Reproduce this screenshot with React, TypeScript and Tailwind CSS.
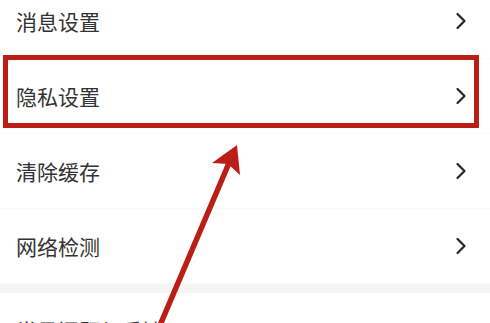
const items = ["消息设置", "隐私设置", "清除缓存", "网络检测"];

function Chevron() {
  return (
    <svg width="12" height="18" viewBox="0 0 12 18" fill="none">
      <polyline
        points="2.5,2 9.5,9 2.5,16"
        stroke="#262626"
        strokeWidth="2.2"
        strokeLinecap="round"
        strokeLinejoin="round"
      />
    </svg>
  );
}

function Row({ label }: { label: string }) {
  return (
    <div className="flex h-[75px] items-center justify-between border-b border-[#fafafa] pl-4 pr-[23px]">
      <span className="text-[21px] leading-none text-[#333]">{label}</span>
      <Chevron />
    </div>
  );
}

export default function App() {
  return (
    <div
      className="relative h-[323px] w-[490px] overflow-hidden bg-white"
      style={{ fontFamily: '"Noto Sans CJK SC", "Noto Sans", sans-serif' }}
    >
      <div className="-mt-4 flex flex-col">
        {items.map((label) => (
          <Row key={label} label={label} />
        ))}
        <div className="h-[9px] bg-[#f5f5f7]" />
        <div className="flex h-[75px] items-center pl-4">
          <span className="text-[21px] leading-none text-[#333]">常见问题与反馈</span>
        </div>
      </div>

      {/* annotation: highlight box */}
      <div className="absolute left-[3px] top-[55px] h-[73px] w-[476px] border-[5px] border-[#ba1e17]" />

      {/* annotation: arrow */}
      <svg className="absolute left-0 top-0" width="490" height="323" viewBox="0 0 490 323">
        <line x1="158" y1="330" x2="229" y2="163" stroke="#ba1e17" strokeWidth="5.5" />
        <polygon points="237,145 240,175 228,164 212,163" fill="#ba1e17" />
      </svg>
    </div>
  );
}
